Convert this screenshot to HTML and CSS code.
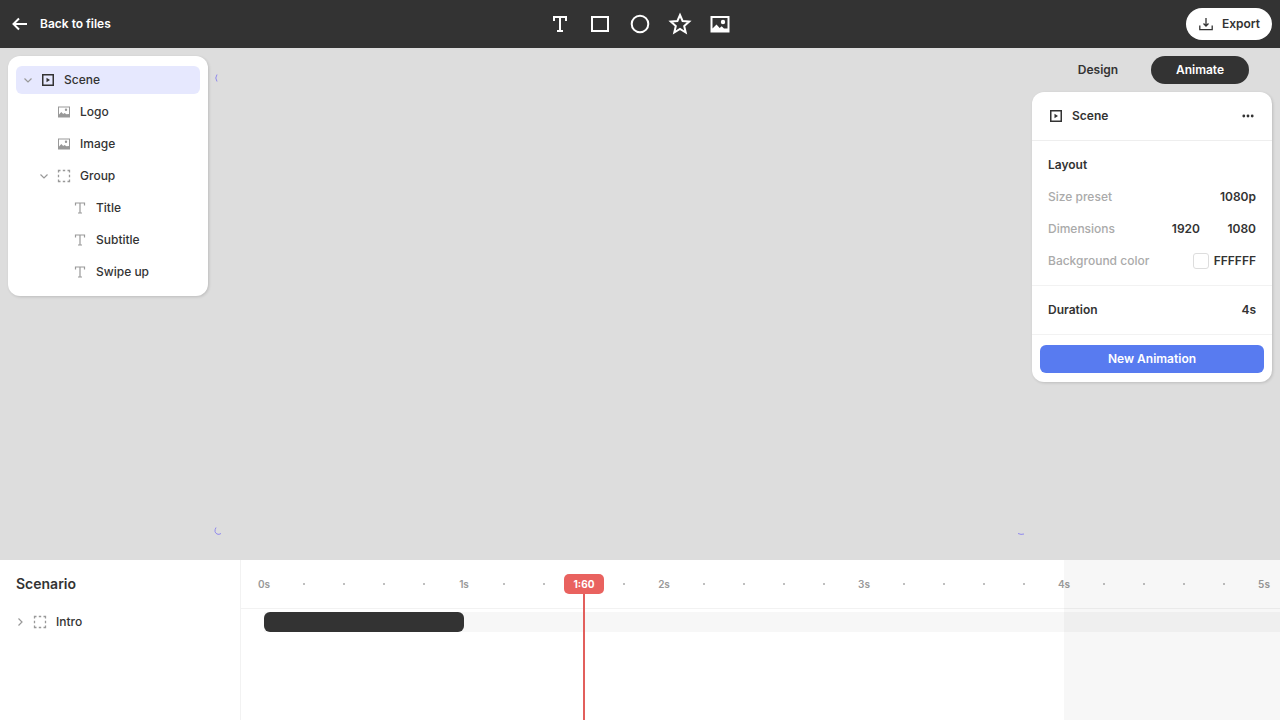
FILE: index.html
```html
<!DOCTYPE html>
<html lang="en">
<head>
  <meta charset="UTF-8" />
  <meta name="viewport" content="width=device-width, initial-scale=1.0" />
  <title>Scene editor</title>
  <link rel="stylesheet" href="styles.css">
</head>
<body>
  <svg class="sprite" aria-hidden="true">
    <symbol id="i-scene" viewBox="0 0 16 16">
      <rect x="2.75" y="2.75" width="10.5" height="10.5" fill="none" stroke="currentColor" stroke-width="1.5"/>
      <path d="M6.5 5.7v4.6L10 8z" fill="currentColor"/>
    </symbol>
    <symbol id="i-image" viewBox="0 0 16 16">
      <path fill="currentColor" fill-rule="evenodd" d="M2 2.5h12v11H2zM3 3.5v7l2.3-2.4 1.9 2 1.3-1.2 2 1.4 2.5-.2V3.5zM10 4.6a1.2 1.2 0 1 1 0 2.4a1.2 1.2 0 0 1 0-2.4z"/>
    </symbol>
    <symbol id="i-group" viewBox="0 0 16 16">
      <path d="M2.5 4.5v-2h2M6.8 2.5h2.4M11.5 2.5h2v2M13.5 6.8v2.4M13.5 11.5v2h-2M9.2 13.5H6.8M4.500 13.5h-2v-2M2.5 9.200V6.800" fill="none" stroke="currentColor" stroke-width="1.3"/>
    </symbol>
    <symbol id="i-text" viewBox="0 0 16 16">
      <path d="M3.5 5.5V3h9v2.5M8 3v10M6 13h4" fill="none" stroke="currentColor" stroke-width="1.2"/>
    </symbol>
    <symbol id="i-chevron" viewBox="0 0 16 16">
      <path d="M4.5 6.5L8 10l3.5-3.5" fill="none" stroke="currentColor" stroke-width="1.2"/>
    </symbol>
  </svg>

  <header class="topbar">
    <a class="back" href="#">
      <svg viewBox="0 0 16 16"><path d="M15 8H2M7 2.5L1.5 8 7 13.5" fill="none" stroke="currentColor" stroke-width="2"/></svg>
      Back to files
    </a>
    <div class="tools">
      <button type="button" aria-label="Text"><svg viewBox="0 0 24 24"><path d="M6 9V5h12v4M12 5v14M9 19h6" fill="none" stroke="currentColor" stroke-width="2"/></svg></button>
      <button type="button" aria-label="Rectangle"><svg viewBox="0 0 24 24"><rect x="4" y="5" width="16" height="14" fill="none" stroke="currentColor" stroke-width="2"/></svg></button>
      <button type="button" aria-label="Ellipse"><svg viewBox="0 0 24 24"><circle cx="12" cy="12" r="8.3" fill="none" stroke="currentColor" stroke-width="2"/></svg></button>
      <button type="button" aria-label="Star"><svg viewBox="0 0 24 24"><path d="M12 3l2.6 6 6.600.6-5 4.400 1.500 6.500L12 17l-5.700 3.500L7.800 14l-5-4.400L9.400 9z" fill="none" stroke="currentColor" stroke-width="2"/></svg></button>
      <button type="button" aria-label="Image"><svg viewBox="0 0 24 24"><path fill="currentColor" fill-rule="evenodd" d="M2.5 4h19v16.500h-19zM4.500 6v10.500l4-4 3.200 3.600 2-1.800 2.300 2.200h3.500V6zM15 7.800a2.200 2.200 0 1 1 0 4.400a2.200 2.200 0 0 1 0-4.400z"/></svg></button>
    </div>
    <button type="button" class="export">
      <svg viewBox="0 0 16 16"><path d="M8 2v8M5.500 7.500L8 10l2.500-2.500M1.800 9.500v4.200h12.400V9.500" fill="none" stroke="currentColor" stroke-width="1.3"/></svg>
      Export
    </button>
  </header>

  <main class="workspace">
    <nav class="panel layers" aria-label="Layers">
      <button type="button" class="layer selected"><svg class="muted"><use href="#i-chevron"/></svg><svg><use href="#i-scene"/></svg><span>Scene</span></button>
      <button type="button" class="layer level-2"><svg class="muted"><use href="#i-image"/></svg><span>Logo</span></button>
      <button type="button" class="layer level-2"><svg class="muted"><use href="#i-image"/></svg><span>Image</span></button>
      <button type="button" class="layer level-1"><svg class="muted"><use href="#i-chevron"/></svg><svg class="muted"><use href="#i-group"/></svg><span>Group</span></button>
      <button type="button" class="layer level-3"><svg class="muted"><use href="#i-text"/></svg><span>Title</span></button>
      <button type="button" class="layer level-3"><svg class="muted"><use href="#i-text"/></svg><span>Subtitle</span></button>
      <button type="button" class="layer level-3"><svg class="muted"><use href="#i-text"/></svg><span>Swipe up</span></button>
    </nav>

    <!-- visible bits of the scene's corner handles -->
    <svg class="handle top-left" viewBox="0 0 8 8"><path d="M3 .5Q.5 4 3 7.5" /></svg>
    <svg class="handle bottom-left" viewBox="0 0 8 8"><path d="M2 .5Q-.5 5 3 7 5 8 7 6.5" /></svg>
    <svg class="handle bottom-right" viewBox="0 0 8 8"><path d="M1 6.500Q4 8 7 7" /></svg>

    <aside class="inspector">
      <div class="tabs">
        <button type="button">Design</button>
        <button type="button" class="active">Animate</button>
      </div>
      <form class="panel">
        <div class="panel-head">
          <svg><use href="#i-scene"/></svg>
          <h2>Scene</h2>
          <button type="button" class="more" aria-label="More">
            <svg viewBox="0 0 16 16" fill="currentColor"><circle cx="3.8" cy="8" r="1.4"/><circle cx="8" cy="8" r="1.4"/><circle cx="12.2" cy="8" r="1.4"/></svg>
          </button>
        </div>
        <div class="section">
          <h3>Layout</h3>
          <div class="field">
            <label for="preset">Size preset</label>
            <select id="preset"><option>1080p</option></select>
          </div>
          <div class="field">
            <label for="width">Dimensions</label>
            <input id="width" type="text" value="1920">
            <input id="height" type="text" value="1080" aria-label="Height">
          </div>
          <div class="field">
            <label for="color">Background color</label>
            <button type="button" class="swatch" aria-label="Pick color"></button>
            <input id="color" class="hex" type="text" value="FFFFFF">
          </div>
        </div>
        <div class="section">
          <div class="field strong">
            <label for="duration">Duration</label>
            <input id="duration" type="text" value="4s">
          </div>
        </div>
        <div class="actions">
          <button type="button" class="primary">New Animation</button>
        </div>
      </form>
    </aside>
  </main>

  <section class="timeline">
    <div class="scenario">
      <h1>Scenario</h1>
      <button type="button" class="layer"><svg class="muted closed"><use href="#i-chevron"/></svg><svg class="muted"><use href="#i-group"/></svg><span>Intro</span></button>
    </div>
    <div class="tracks">
      <div class="out-of-range"></div>
      <div class="ruler">
        <span>0s</span><i></i><i></i><i></i><i></i>
        <span>1s</span><i></i><i></i><i></i><i></i>
        <span>2s</span><i></i><i></i><i></i><i></i>
        <span>3s</span><i></i><i></i><i></i><i></i>
        <span>4s</span><i></i><i></i><i></i><i></i>
        <span>5s</span>
      </div>
      <div class="track"><div class="clip"></div></div>
      <div class="playhead"><span>1:60</span></div>
    </div>
  </section>
</body>
</html>
```
FILE: styles.css
```css
* {
  box-sizing: border-box;
}
body {
  margin: 0;
  min-height: 100vh;
  display: flex;
  flex-direction: column;
  font-family: Inter, sans-serif;
  font-size: 12px;
  font-weight: 500;
  line-height: 16px;
  color: #333;
  background: #ddd;
}
h1, h2, h3 {
  margin: 0;
  font-size: 12px;
  font-weight: 600;
}
button, input, select {
  font: inherit;
  color: inherit;
  border: 0;
  padding: 0;
  background: none;
}
button {
  cursor: pointer;
}
svg {
  width: 16px;
  height: 16px;
  flex: none;
}
.sprite {
  display: none;
}
.muted {
  color: #999;
}

/* top bar */
.topbar {
  display: grid;
  grid-template-columns: 1fr auto 1fr;
  align-items: center;
  height: 48px;
  padding: 0 8px;
  background: #333;
  color: #fff;
}
.back {
  display: flex;
  align-items: center;
  gap: 12px;
  padding-left: 4px;
  color: inherit;
  font-weight: 600;
  text-decoration: none;
}
.tools {
  display: flex;
  gap: 16px;
}
.tools button {
  display: flex;
}
.tools svg {
  width: 24px;
  height: 24px;
}
.export {
  justify-self: end;
  display: flex;
  align-items: center;
  gap: 8px;
  height: 32px;
  padding: 0 12px;
  border-radius: 16px;
  background: #fff;
  color: #333;
  font-weight: 600;
}

/* workspace */
.workspace {
  position: relative;
  flex: 1;
  display: flex;
  justify-content: space-between;
  align-items: flex-start;
  padding: 8px;
}
.panel {
  background: #fff;
  border-radius: 12px;
  box-shadow: 1px 1px 3px rgba(0, 0, 0, 0.15);
}
.layers {
  width: 200px;
  padding: 10px 8px;
  display: flex;
  flex-direction: column;
  gap: 4px;
}
.layer {
  display: flex;
  align-items: center;
  gap: 4px;
  height: 28px;
  padding: 0 4px;
  border-radius: 6px;
  text-align: left;
}
.layer span {
  padding-left: 4px;
}
.selected {
  background: #e6e8fe;
}
.level-1 {
  padding-left: 20px;
}
.level-2 {
  padding-left: 40px;
}
.level-3 {
  padding-left: 56px;
}
.handle {
  position: absolute;
  width: 8px;
  height: 8px;
  fill: none;
  stroke: #9089ee;
}
.top-left {
  left: 214px;
  top: 26px;
}
.bottom-left {
  left: 214px;
  bottom: 25px;
}
.bottom-right {
  right: 255px;
  bottom: 25px;
}

/* inspector */
.inspector {
  width: 240px;
}
.tabs {
  display: flex;
  gap: 4px;
  padding: 0 23px 8px 17px;
}
.tabs button {
  flex: 1;
  height: 28px;
  border-radius: 14px;
  font-weight: 600;
}
.tabs .active {
  background: #333;
  color: #fff;
}
.panel-head {
  display: flex;
  align-items: center;
  gap: 8px;
  height: 49px;
  padding: 0 16px;
  border-bottom: 1px solid #eee;
}
.more {
  display: flex;
  margin-left: auto;
}
.section {
  padding: 8px 16px;
  border-bottom: 1px solid #f2f2f2;
}
.section h3 {
  line-height: 32px;
}
.field {
  display: flex;
  align-items: center;
  height: 32px;
}
.field label {
  margin-right: auto;
  color: #aaa;
}
.field input, .field select {
  width: 56px;
  font-weight: 600;
  text-align: right;
}
.field select {
  appearance: none;
  text-align-last: right;
}
.field .hex {
  width: 47px;
}
.strong label {
  color: inherit;
  font-weight: 600;
}
.swatch {
  width: 16px;
  height: 16px;
  border: 1px solid #ddd;
  border-radius: 3px;
}
.actions {
  padding: 10px 8px 9px;
}
.primary {
  width: 100%;
  height: 28px;
  border-radius: 6px;
  background: #587bf0;
  color: #fff;
  font-weight: 600;
}

/* timeline */
.timeline {
  display: flex;
  min-height: 160px;
  background: #fff;
}
.scenario {
  width: 241px;
  flex: none;
  border-right: 1px solid #f2f2f2;
}
.scenario h1 {
  padding: 0 16px;
  font-size: 14px;
  line-height: 48px;
}
.scenario .layer {
  padding: 0 12px;
}
.closed {
  transform: rotate(-90deg);
}
.tracks {
  position: relative;
  flex: 1;
  min-width: 0;
  overflow: hidden;
}
.ruler {
  display: flex;
  align-items: center;
  height: 49px;
  padding-left: 3px;
  border-bottom: 1px solid #f2f2f2;
  font-size: 10px;
  font-weight: 600;
  color: #999;
}
.ruler span, .ruler i {
  flex: 0 0 40px;
  text-align: center;
}
.ruler i::before {
  content: "";
  display: block;
  width: 2px;
  height: 2px;
  margin: 0 auto;
  border-radius: 1px;
  background: #aaa;
}
.track {
  height: 20px;
  margin: 3px 0 0 23px;
  background: #f7f7f7;
}
.clip {
  width: 200px;
  height: 20px;
  border-radius: 6px;
  background: #333;
}
.out-of-range {
  position: absolute;
  inset: 0 0 0 823px;
  background: rgba(0, 0, 0, 0.03);
}
.playhead {
  position: absolute;
  top: 14px;
  bottom: 0;
  left: 323px;
  width: 40px;
  background: linear-gradient(#e25f5c, #e25f5c) center / 2px 100% no-repeat;
}
.playhead span {
  display: block;
  border-radius: 5px;
  background: #e9625f;
  color: #fff;
  font-size: 10px;
  font-weight: 700;
  line-height: 20px;
  text-align: center;
}
```
